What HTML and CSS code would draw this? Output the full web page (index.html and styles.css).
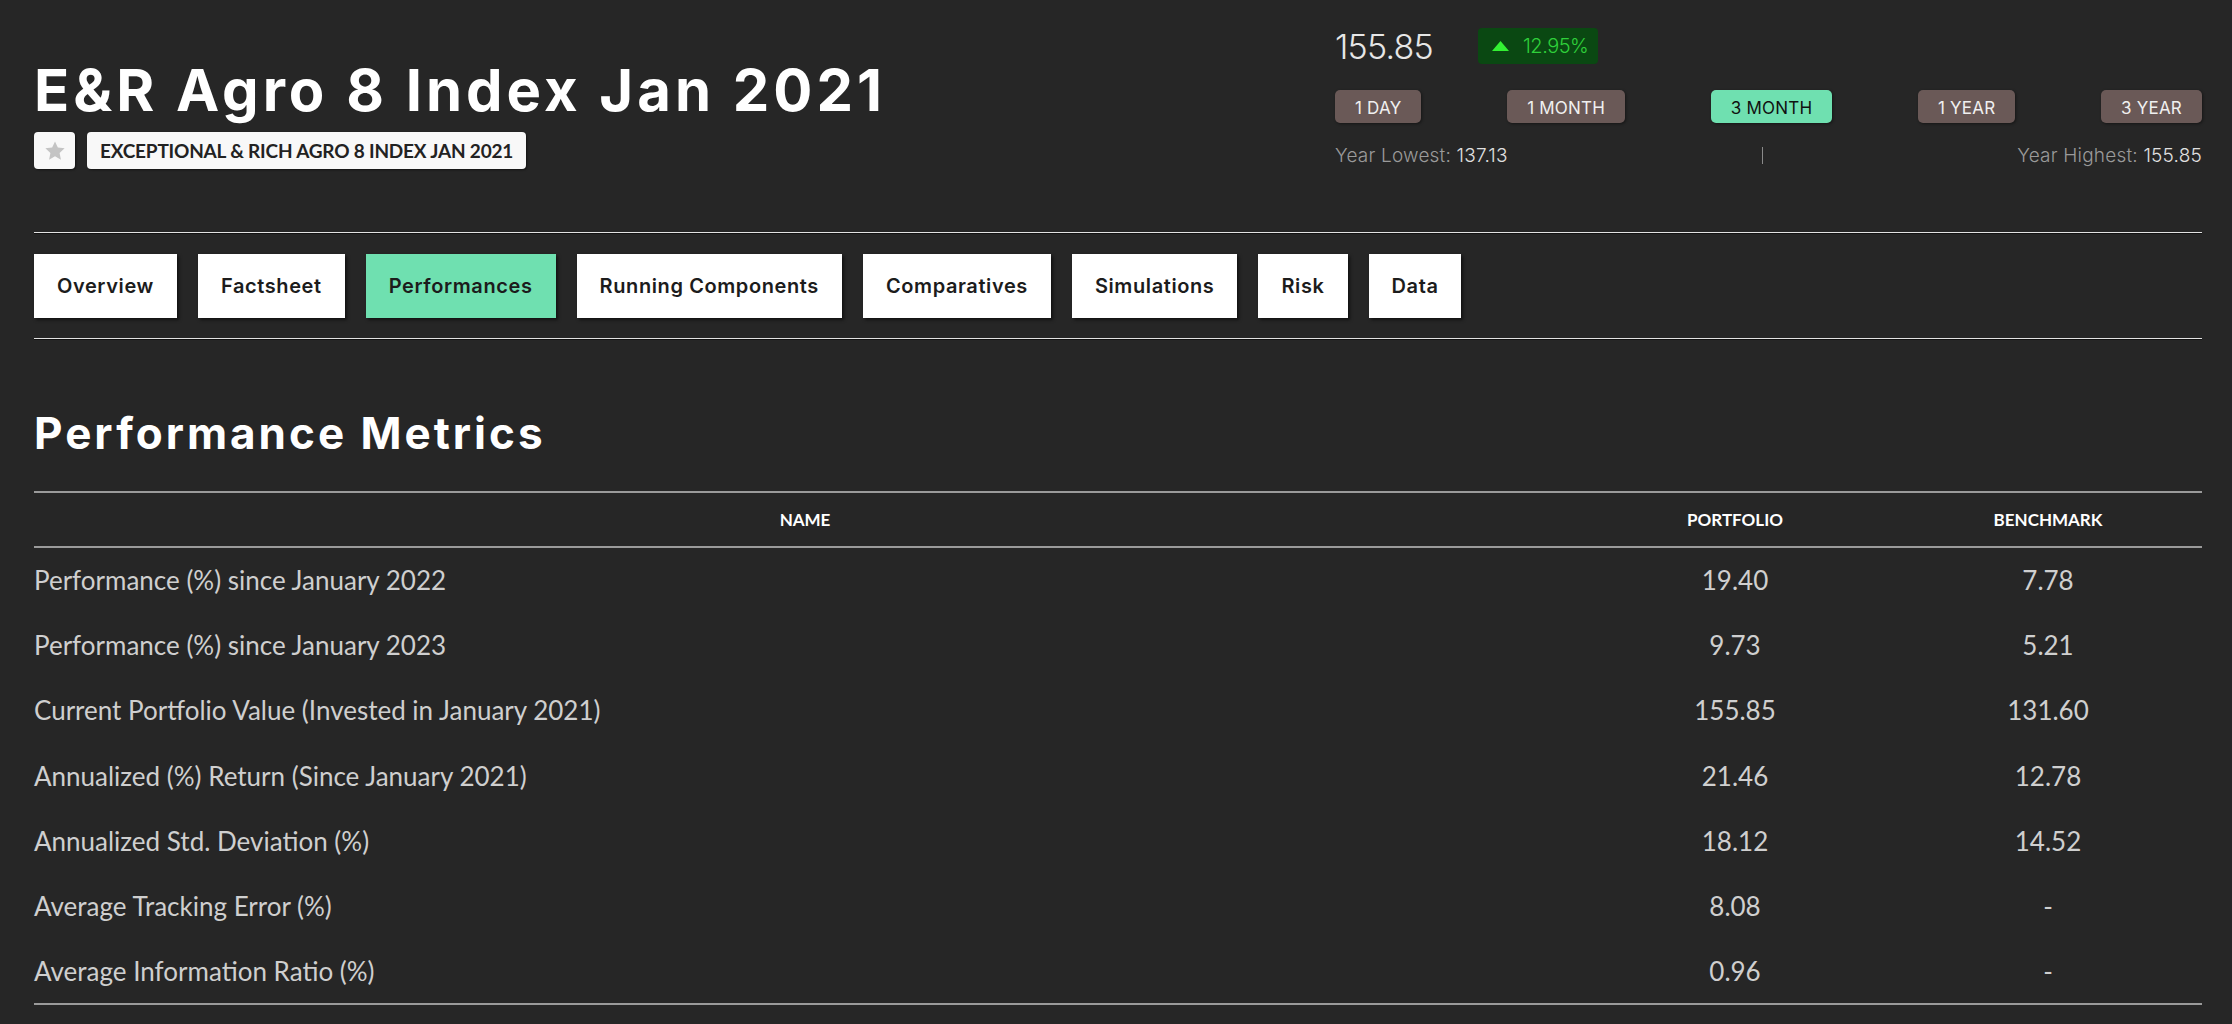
FILE: index.html
```html
<!DOCTYPE html>
<html lang="en">
<head>
<meta charset="utf-8">
<title>E&amp;R Agro 8 Index Jan 2021</title>
<link rel="stylesheet" href="styles.css">
</head>
<body>
<div class="page">
  <header class="header">
    <div class="title-block">
      <h1 class="title">E&amp;R Agro 8 Index Jan 2021</h1>
      <div class="sub-row">
        <span class="star-box">
          <svg width="22" height="22" viewBox="0 0 24 24"><polygon points="12,1.5 15.1,8.3 22.5,9.1 17,14.1 18.5,21.5 12,17.8 5.5,21.5 7,14.1 1.5,9.1 8.9,8.3" fill="#c4c4c4"/></svg>
        </span>
        <span class="sub-badge">EXCEPTIONAL &amp; RICH AGRO 8 INDEX JAN 2021</span>
      </div>
    </div>
    <div class="quote">
      <div class="price-row">
        <span class="price">155.85</span>
        <span class="change">
          <svg width="17" height="10" viewBox="0 0 17 10"><polygon points="8.5,0 17,10 0,10" fill="#33f033"/></svg>
          <span>12.95%</span>
        </span>
      </div>
      <div class="periods">
        <button class="period">1 DAY</button>
        <button class="period">1 MONTH</button>
        <button class="period active">3 MONTH</button>
        <button class="period">1 YEAR</button>
        <button class="period">3 YEAR</button>
      </div>
      <div class="range">
        <span class="range-item">Year Lowest: <b>137.13</b></span>
        <span class="range-sep"></span>
        <span class="range-item">Year Highest: <b>155.85</b></span>
      </div>
    </div>
  </header>

  <hr class="rule rule-top">

  <nav class="tabs">
    <a class="tab">Overview</a>
    <a class="tab">Factsheet</a>
    <a class="tab active">Performances</a>
    <a class="tab">Running Components</a>
    <a class="tab">Comparatives</a>
    <a class="tab">Simulations</a>
    <a class="tab">Risk</a>
    <a class="tab">Data</a>
  </nav>

  <hr class="rule rule-bottom">

  <h2 class="section-title">Performance Metrics</h2>

  <table class="metrics">
    <colgroup>
      <col class="col-name">
      <col class="col-val">
      <col class="col-val2">
    </colgroup>
    <thead>
      <tr><th>NAME</th><th>PORTFOLIO</th><th>BENCHMARK</th></tr>
    </thead>
    <tbody>
      <tr><td>Performance (%) since January 2022</td><td>19.40</td><td>7.78</td></tr>
      <tr><td>Performance (%) since January 2023</td><td>9.73</td><td>5.21</td></tr>
      <tr><td>Current Portfolio Value (Invested in January 2021)</td><td>155.85</td><td>131.60</td></tr>
      <tr><td>Annualized (%) Return (Since January 2021)</td><td>21.46</td><td>12.78</td></tr>
      <tr><td>Annualized Std. Deviation (%)</td><td>18.12</td><td>14.52</td></tr>
      <tr><td>Average Tracking Error (%)</td><td>8.08</td><td>-</td></tr>
      <tr><td>Average Information Ratio (%)</td><td>0.96</td><td>-</td></tr>
    </tbody>
  </table>
</div>
</body>
</html>
```
FILE: styles.css
```css
* { box-sizing: border-box; }
html, body { margin: 0; padding: 0; }
body {
  background: #262626;
  color: #fff;
  font-family: "Inter", "Liberation Sans", sans-serif;
}
.page {
  padding: 0 30px 0 34px;
}

/* Header */
.header {
  display: flex;
  justify-content: space-between;
  align-items: flex-start;
}
.title-block {
  padding-top: 61px;
}
.title {
  margin: 0;
  font-family: "Inter", sans-serif;
  font-weight: 700;
  font-size: 58px;
  line-height: 58px;
  color: #fff;
  letter-spacing: 4px;
}
.sub-row {
  display: flex;
  gap: 12px;
  margin-top: 13px;
}
.star-box {
  width: 41px;
  height: 37px;
  background: #f8f8f8;
  border-radius: 4px;
  display: flex;
  align-items: center;
  justify-content: center;
  box-shadow: 1px 1px 2px rgba(0,0,0,.5);
}
.sub-badge {
  height: 37px;
  background: #f8f8f8;
  border-radius: 4px;
  padding: 0 13px;
  display: flex;
  align-items: center;
  font-family: "Lato", sans-serif;
  font-weight: 700;
  font-size: 19px;
  letter-spacing: -0.2px;
  color: #222;
  box-shadow: 1px 1px 2px rgba(0,0,0,.5);
}

/* Quote panel */
.quote {
  width: 867px;
  padding-top: 28px;
}
.price-row {
  display: flex;
  align-items: center;
  height: 36px;
}
.price {
  font-weight: 300;
  font-size: 34px;
  color: #e6e6e6;
  letter-spacing: -0.8px;
  width: 143px;
}
.change {
  width: 120px;
  height: 36px;
  background: #0a4812;
  border-radius: 4px;
  display: flex;
  align-items: center;
  padding-left: 14px;
  gap: 14px;
  font-weight: 300;
  font-size: 20px;
  color: #2fd03a;
  letter-spacing: -0.5px;
}
.periods {
  display: flex;
  justify-content: space-between;
  margin-top: 26px;
}
.period {
  height: 33px;
  padding: 2px 20px 0;
  border: 0;
  border-radius: 5px;
  background: #6a5957;
  color: #f0f0f0;
  font-family: "Inter", sans-serif;
  font-weight: 400;
  font-size: 17px;
  letter-spacing: 0.2px;
  box-shadow: 1px 1px 3px rgba(0,0,0,.45);
}
.period.active {
  background: #6fe0b0;
  color: #111;
}
.range {
  display: flex;
  justify-content: space-between;
  align-items: center;
  margin-top: 21px;
  height: 22px;
  font-weight: 300;
  font-size: 19px;
  color: #9a9a9a;
  letter-spacing: 0.2px;
}
.range-item b {
  font-weight: 300;
  color: #e0e0e0;
}
.range-sep {
  width: 1px;
  height: 17px;
  background: #8a8a8a;
}

/* Rules */
.rule {
  margin: 0;
  height: 0;
  border: 0;
  border-top: 1px solid #e2e2e2;
  border-bottom: 1px solid #121212;
}
.rule-top { margin-top: 63px; }

/* Tabs */
.tabs {
  display: flex;
  gap: 21px;
  margin: 20px 0;
}
.tab {
  height: 64px;
  padding: 0 23px;
  display: flex;
  align-items: center;
  background: #fff;
  color: #1c1c1c;
  font-weight: 600;
  font-size: 20px;
  letter-spacing: 0.6px;
  box-shadow: 2px 2px 3px rgba(0,0,0,.55);
}
.tab.active {
  background: #6fe0b0;
}

/* Section */
.section-title {
  margin: 71px 0 36px;
  font-weight: 700;
  font-size: 44px;
  line-height: 44px;
  color: #fff;
  letter-spacing: 3px;
}

/* Table */
.metrics {
  width: 100%;
  border-collapse: collapse;
  table-layout: fixed;
  font-family: "Lato", sans-serif;
}
.col-name { width: 1542px; }
.col-val { width: 318px; }
.col-val2 { width: 308px; }
.metrics thead tr {
  border-top: 2px solid #9a9a9a;
  border-bottom: 2px solid #9a9a9a;
}
.metrics th {
  height: 55px;
  padding: 0;
  font-weight: 700;
  font-size: 17px;
  color: #fff;
  text-align: center;
  vertical-align: middle;
}
.metrics tbody tr:last-child {
  border-bottom: 2px solid #9a9a9a;
}
.metrics td {
  height: 65.3px;
  padding: 0;
  font-weight: 400;
  font-size: 26px;
  color: #cfcfcf;
  text-align: center;
  vertical-align: middle;
}
.metrics td:first-child {
  text-align: left;
}
```
